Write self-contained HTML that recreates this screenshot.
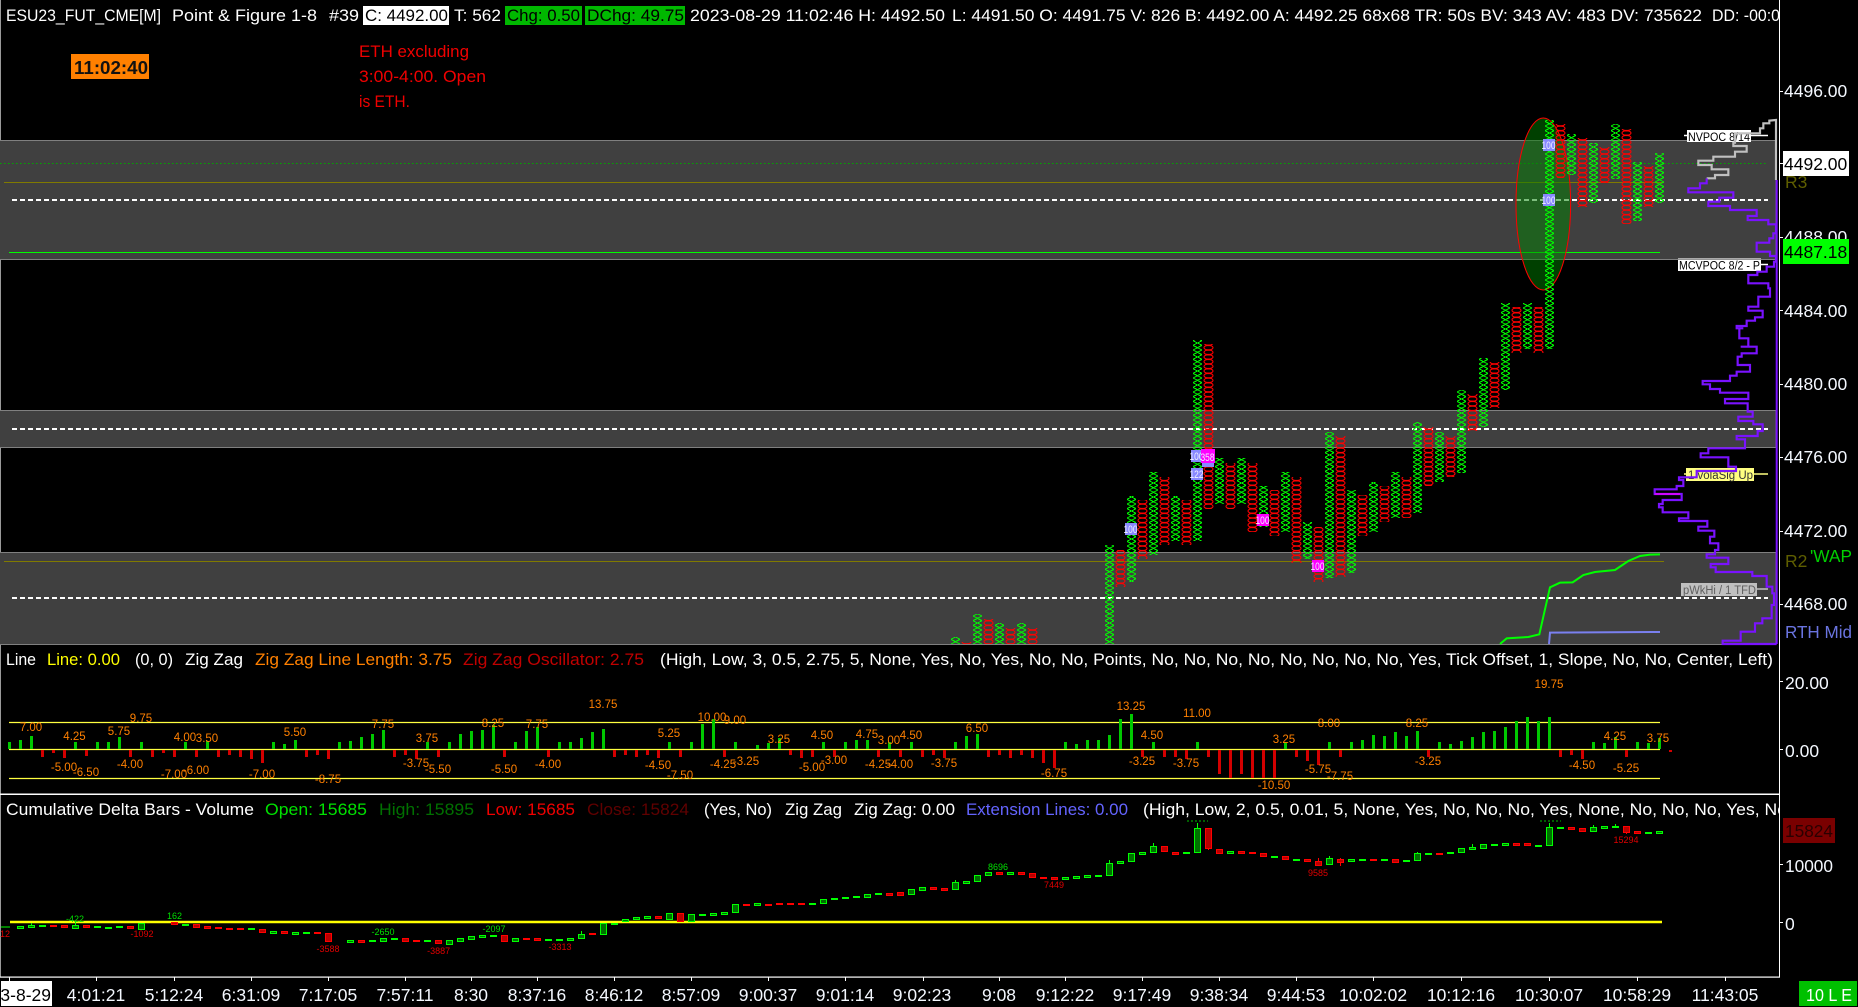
<!DOCTYPE html>
<html lang="en"><head><meta charset="utf-8"><title>ESU23 Point &amp; Figure</title>
<style>
html,body{margin:0;padding:0;background:#000;width:1858px;height:1007px;overflow:hidden}
svg{display:block}
text{font-family:"Liberation Sans",sans-serif;font-size:17px;fill:#fff;white-space:pre}
.o text,text.o{font-size:11.5px;fill:#ff8000;text-anchor:middle}
.s text{font-size:9px;text-anchor:middle}
.t text{text-anchor:middle;font-size:17.5px;fill:#f4f8ff}
.a text{font-size:17.5px;fill:#f4f8ff}
.b{font-size:11px;fill:#f0f0ff}
</style></head><body>
<svg width="1858" height="1007" viewBox="0 0 1858 1007" xmlns="http://www.w3.org/2000/svg">
<defs>
<pattern id="px" x="3.5" y="0" width="11" height="14" patternUnits="userSpaceOnUse">
<path shape-rendering="crispEdges" d="M1 0L10 4.67M10 0L1 4.67M1 4.67L10 9.33M10 4.67L1 9.33M1 9.33L10 14M10 9.33L1 14" stroke="#00ff00" stroke-width="1" fill="none"/>
</pattern>
<pattern id="po" x="3.5" y="0" width="11" height="14" patternUnits="userSpaceOnUse">
<g fill="none" stroke="#ff0000" stroke-width="1.1"><ellipse cx="5.5" cy="2.33" rx="4.5" ry="2.33"/><ellipse cx="5.5" cy="7" rx="4.5" ry="2.33"/><ellipse cx="5.5" cy="11.67" rx="4.5" ry="2.33"/></g>
<path d="M3 0h5M3 4.67h5M3 9.33h5M3 14h5" stroke="#ff0000" stroke-width="1.6" fill="none"/>
</pattern>
<clipPath id="c1"><rect x="0" y="0" width="1779" height="644"/></clipPath>
<clipPath id="c2"><rect x="0" y="0" width="1779" height="977"/></clipPath>
<clipPath id="c3"><rect x="1" y="981" width="51" height="25"/></clipPath>
</defs>

<!-- left edge and axis -->
<rect x="0" y="0" width="1" height="977" fill="#9a9a9a"/>
<rect x="1779" y="0" width="1" height="977" fill="#fff"/>

<!-- bands -->
<g fill="#404040" stroke="#808080" stroke-width="1">
<rect x="-1" y="140.5" width="1777" height="119"/>
<rect x="-1" y="410.5" width="1777" height="37"/>
<rect x="-1" y="552.5" width="1777" height="92"/>
</g>
<path d="M0 163.5H1768" stroke="#00a800" stroke-width="1" stroke-dasharray="1.5 2.5"/>
<path d="M4 182.5H1664" stroke="#807a00" stroke-width="1"/>
<path d="M9 252.5H1660" stroke="#00ff00" stroke-width="1"/>
<path d="M4 561.5H1664" stroke="#807a00" stroke-width="1"/>
<g stroke="#fff" stroke-width="2" stroke-dasharray="5 3">
<path d="M12 200H1768"/><path d="M12 429H1768"/><path d="M12 598H1768"/>
</g>

<!-- ellipse -->
<ellipse cx="1543.3" cy="204" rx="27.3" ry="86" fill="#008000" fill-opacity=".5" stroke="#ff0000" stroke-width="1"/>

<!-- point & figure columns -->
<g clip-path="url(#c1)"><g transform="translate(.5 0)">
<path fill="url(#px)" d="M949.5 637h11v8h-11zM971.5 614h11v31h-11zM993.5 623h11v22h-11zM1015.5 623h11v22h-11zM1103.5 545h11v100h-11zM1125.5 496h11v86h-11zM1147.5 472h11v83h-11zM1169.5 496h11v45h-11zM1191.5 340h11v201h-11zM1213.5 458h11v46h-11zM1235.5 458h11v46h-11zM1257.5 486h11v41h-11zM1279.5 472h11v60h-11zM1301.5 522h11v37h-11zM1323.5 432h11v146h-11zM1345.5 490h11v83h-11zM1367.5 482h11v50h-11zM1389.5 472h11v46h-11zM1411.5 422h11v91h-11zM1433.5 432h11v50h-11zM1455.5 390h11v83h-11zM1477.5 358h11v69h-11zM1499.5 303h11v87h-11zM1521.5 303h11v46h-11zM1543.5 120h11v229h-11zM1565.5 134h11v41h-11zM1587.5 143h11v60h-11zM1609.5 124h11v55h-11zM1631.5 162h11v59h-11zM1653.5 153h11v50h-11z"/>
<path fill="url(#po)" d="M960.5 642h11v3h-11zM982.5 619h11v26h-11zM1004.5 628h11v17h-11zM1026.5 628h11v17h-11zM1114.5 550h11v37h-11zM1136.5 500h11v59h-11zM1158.5 477h11v68h-11zM1180.5 500h11v45h-11zM1202.5 344h11v165h-11zM1224.5 463h11v46h-11zM1246.5 463h11v69h-11zM1268.5 490h11v46h-11zM1290.5 477h11v86h-11zM1312.5 527h11v55h-11zM1334.5 436h11v141h-11zM1356.5 495h11v41h-11zM1378.5 486h11v36h-11zM1400.5 477h11v41h-11zM1422.5 427h11v59h-11zM1444.5 436h11v41h-11zM1466.5 394h11v37h-11zM1488.5 362h11v46h-11zM1510.5 307h11v46h-11zM1532.5 307h11v46h-11zM1554.5 124h11v54h-11zM1576.5 138h11v69h-11zM1598.5 147h11v36h-11zM1620.5 129h11v95h-11zM1642.5 166h11v41h-11z"/>
</g></g>

<!-- badges -->
<g>
<rect x="1543" y="139" width="12" height="12" fill="#8888ff"/><text class="b" x="1541.5" y="149" textLength="14" lengthAdjust="spacingAndGlyphs">100</text>
<rect x="1543" y="194" width="12" height="12" fill="#8888ff"/><text class="b" x="1541.5" y="204" textLength="14" lengthAdjust="spacingAndGlyphs">100</text>
<rect x="1125" y="523" width="12" height="12" fill="#8888ff"/><text class="b" x="1123.5" y="533" textLength="14" lengthAdjust="spacingAndGlyphs">100</text>
<rect x="1191" y="450" width="12" height="12" fill="#8888ff"/><text class="b" x="1189.5" y="460" textLength="14" lengthAdjust="spacingAndGlyphs">100</text>
<rect x="1191" y="468" width="12" height="12" fill="#8888ff"/><text class="b" x="1189.5" y="478" textLength="14" lengthAdjust="spacingAndGlyphs">122</text>
<rect x="1202" y="455" width="12" height="12" fill="#8888ff"/>
<rect x="1201" y="449" width="14" height="14" fill="#ff00ff"/><text class="b" x="1200.5" y="461" textLength="14" lengthAdjust="spacingAndGlyphs">358</text>
<rect x="1257" y="514" width="12" height="12" fill="#ff00ff"/><text class="b" x="1255.5" y="524" textLength="14" lengthAdjust="spacingAndGlyphs">100</text>
<rect x="1312" y="560" width="12" height="12" fill="#ff00ff"/><text class="b" x="1310.5" y="570" textLength="14" lengthAdjust="spacingAndGlyphs">100</text>
</g>

<!-- level labels -->
<path d="M1684 135.5H1768" stroke="#fff" stroke-width="1.5"/>
<rect x="1687" y="130" width="64" height="12" fill="#fff"/>
<text x="1688" y="141" textLength="62" lengthAdjust="spacingAndGlyphs" style="font-size:11.5px;fill:#000">NVPOC 8/14</text>
<path d="M1740 264.5H1768" stroke="#fff" stroke-width="1.5"/>
<rect x="1678" y="258" width="83" height="1.5" fill="#aaa"/>
<rect x="1678" y="260" width="83" height="11" fill="#fff"/>
<text x="1679" y="269.5" textLength="81" lengthAdjust="spacingAndGlyphs" style="font-size:11.5px;fill:#000">MCVPOC 8/2 - P</text>
<path d="M1684 474H1768" stroke="#ffff80" stroke-width="1.5"/>
<rect x="1686" y="468" width="68" height="13" fill="#ffff80"/>
<text x="1688" y="479" textLength="65" lengthAdjust="spacingAndGlyphs" style="font-size:11.5px;fill:#333">1 volaSig Up</text>
<path d="M1750 589H1768" stroke="#c0c0c0" stroke-width="1.5"/>
<rect x="1681" y="583" width="76" height="13" fill="#c0c0c0"/>
<text x="1683" y="594" textLength="73" lengthAdjust="spacingAndGlyphs" style="font-size:11.5px;fill:#606060">pWkHi / 1 TFD</text>

<!-- VWAP lines -->
<g transform="translate(1480 390) scale(.33333)" fill="none" stroke-width="6">
<path stroke="#00ff00" d="M60 762L80 745L115 743L145 741L178 733L190 680L210 592L240 578L278 577L310 555L345 546L405 540L445 513L480 498L510 494L540 493"/>
<path stroke="#7a80f0" d="M207 762L210 728L540 726"/>
</g>

<!-- volume profile -->
<g transform="translate(1480 90) scale(.33333)" fill="none" stroke-width="6.5">
<path stroke="#c0c0c0" d="M888 270V90L868 92V100H850V115H840V130H765V158H760V168H800V185H765V200H700V212H655V225H695V238H745V255H705V265H680"/>
<path stroke="#7a12ff" d="M680 265V280H660V295H625V307H760V323H718V335H685V348H750V360H830V378H803V390H865V403H888V430H880V445H868V458H830V485H870V498H888V515H882V530H860V545H832V555H805V580H865V595H870V620H835V650H805V662H848V682H825V692H800V708H770V715H790H778V745H805V770H782H830V790H785V800H773V825H810V845H770V857H750V873H668V883H690V897H720V900"/>
</g>
<g transform="translate(1480 390) scale(.33333)" fill="none" stroke-width="6.5">
<path stroke="#7a12ff" d="M720 0V8H805V27H735V40H803V65H818V80H775V93H820V103H848V123H833V138H770V148H795V175H685V190H662V202H745V230H768V243H650V262H597V270H610V288H590V298H524V312H605V330H548V342H537V352H548V367H625V385H597V393H682V410H655V422H703V440H690V460H715V480H705V493H680V503H745V522H692V532H707V546H817V558H860V590H877V610H882V645H875V685H847V700H825V725H782V752H728V762H890"/>
<path stroke="#ff00ff" stroke-width="4" d="M524 312H600"/>
</g>
<rect x="1775.7" y="180" width="2" height="464" fill="#7a12ff"/>

<!-- price axis -->
<path d="M1780 91.5h3M1780 163.5h3M1780 237.5h3M1780 310.5h3M1780 384.5h3M1780 457.5h3M1780 531.5h3M1780 604.5h3M1780 681.5h3M1780 749.5h3M1780 864.5h3M1780 922.5h3" stroke="#fff" fill="none"/>
<g class="a">
<text x="1784" y="97">4496.00</text>
<text x="1784" y="243">4488.00</text>
<text x="1784" y="317">4484.00</text>
<text x="1784" y="390">4480.00</text>
<text x="1784" y="463">4476.00</text>
<text x="1784" y="537">4472.00</text>
<text x="1784" y="610">4468.00</text>
<text x="1785" y="689">20.00</text>
<text x="1785" y="757">0.00</text>
<text x="1785" y="872" textLength="48" lengthAdjust="spacingAndGlyphs">10000</text>
<text x="1785" y="930">0</text>
</g>
<rect x="1783" y="151" width="66" height="25" fill="#fff"/><text x="1784" y="170" style="font-size:17.5px;fill:#000">4492.00</text>
<rect x="1783" y="239" width="66" height="25" fill="#00ff00"/><text x="1784" y="258" style="font-size:17.5px;fill:#000">4487.18</text>
<text x="1785" y="188" style="font-size:17.5px;fill:#5e5e00">R3</text>
<text x="1785" y="567" style="font-size:17.5px;fill:#5e5e00">R2</text>
<text x="1810" y="562" textLength="42" lengthAdjust="spacingAndGlyphs" style="font-size:17.5px;fill:#00d000">'WAP</text>
<text x="1785" y="638" textLength="67" lengthAdjust="spacingAndGlyphs" style="font-size:17.5px;fill:#6a74e0">RTH Mid</text>
<rect x="1783" y="818" width="52" height="25" fill="#7a0000"/><text x="1785" y="837" textLength="48" lengthAdjust="spacingAndGlyphs" style="font-size:17.5px;fill:#2a0000">15824</text>

<!-- header row -->
<g clip-path="url(#c2)">
<text x="6" y="21" textLength="155" lengthAdjust="spacingAndGlyphs">ESU23_FUT_CME[M]</text>
<text x="172" y="21" textLength="145" lengthAdjust="spacingAndGlyphs">Point &amp; Figure 1-8</text>
<text x="329" y="21" textLength="30" lengthAdjust="spacingAndGlyphs">#39</text>
<rect x="363" y="6" width="86" height="19" fill="#fff"/>
<text x="365" y="21" textLength="83" lengthAdjust="spacingAndGlyphs" style="fill:#000">C: 4492.00</text>
<text x="454" y="21" textLength="47" lengthAdjust="spacingAndGlyphs">T: 562</text>
<rect x="505" y="6" width="77" height="19" fill="#00b800"/>
<text x="507" y="21" textLength="73" lengthAdjust="spacingAndGlyphs" style="fill:#000">Chg: 0.50</text>
<rect x="585" y="6" width="100" height="19" fill="#00b800"/>
<text x="587" y="21" textLength="97" lengthAdjust="spacingAndGlyphs" style="fill:#000">DChg: 49.75</text>
<text x="690" y="21" textLength="255" lengthAdjust="spacingAndGlyphs">2023-08-29 11:02:46 H: 4492.50</text>
<text x="952" y="21" textLength="750" lengthAdjust="spacingAndGlyphs">L: 4491.50 O: 4491.75 V: 826 B: 4492.00 A: 4492.25 68x68 TR: 50s BV: 343 AV: 483 DV: 735622</text>
<text x="1712" y="21" textLength="68" lengthAdjust="spacingAndGlyphs">DD: -00:0</text>
</g>
<rect x="71" y="54" width="78" height="25" fill="#ff8000"/>
<text x="74" y="74" textLength="74" lengthAdjust="spacingAndGlyphs" style="font-size:18px;font-weight:bold;fill:#111">11:02:40</text>
<g>
<text x="359" y="57" textLength="110" lengthAdjust="spacingAndGlyphs" style="fill:#f00000">ETH excluding</text>
<text x="359" y="82" textLength="127" lengthAdjust="spacingAndGlyphs" style="fill:#f00000">3:00-4:00. Open</text>
<text x="359" y="107" textLength="51" lengthAdjust="spacingAndGlyphs" style="fill:#f00000">is ETH.</text>
</g>

<!-- oscillator pane -->
<rect x="0" y="793.5" width="1779" height="1.5" fill="#fff"/>
<text x="6" y="665" textLength="30" lengthAdjust="spacingAndGlyphs">Line</text>
<text x="47" y="665" textLength="73" lengthAdjust="spacingAndGlyphs" style="fill:#ffff00">Line: 0.00</text>
<text x="135" y="665" textLength="38" lengthAdjust="spacingAndGlyphs">(0, 0)</text>
<text x="185" y="665" textLength="58" lengthAdjust="spacingAndGlyphs">Zig Zag</text>
<text x="255" y="665" textLength="197" lengthAdjust="spacingAndGlyphs" style="fill:#ff8000">Zig Zag Line Length: 3.75</text>
<text x="463" y="665" textLength="181" lengthAdjust="spacingAndGlyphs" style="fill:#c00000">Zig Zag Oscillator: 2.75</text>
<text x="660" y="665" textLength="1113" lengthAdjust="spacingAndGlyphs">(High, Low, 3, 0.5, 2.75, 5, None, Yes, No, Yes, No, No, Points, No, No, No, No, No, No, No, No, Yes, Tick Offset, 1, Slope, No, No, Center, Left)</text>
<path d="M9 722.5H1660M9 749.5H1660M9 778.5H1660" stroke="#ffff40" stroke-width="1.3" fill="none"/>
<g transform="translate(.5 0)">
<path stroke="#00c800" stroke-width="3" fill="none" d="M9 749v-7M20 749v-9M31 749v-13M75 749v-7M97 749v-7M108 749v-7M119 749v-12M141 749v-7M185 749v-7M207 749v-8M273 749v-7M284 749v-5M295 749v-9M339 749v-7M350 749v-8M361 749v-12M372 749v-15M383 749v-19M427 749v-7M449 749v-7M460 749v-15M471 749v-18M482 749v-19M493 749v-24M515 749v-7M526 749v-18M537 749v-22M559 749v-7M570 749v-7M581 749v-11M592 749v-17M603 749v-20M669 749v-7M691 749v-7M702 749v-25M713 749v-30M735 749v-7M757 749v-4M768 749v-6M779 749v-11M823 749v-7M845 749v-7M856 749v-9M867 749v-9M889 749v-7M911 749v-7M955 749v-7M966 749v-13M977 749v-15M1065 749v-7M1076 749v-5M1087 749v-9M1098 749v-9M1109 749v-14M1120 749v-30M1131 749v-35M1153 749v-7M1197 749v-7M1285 749v-7M1329 749v-7M1351 749v-7M1362 749v-9M1373 749v-14M1384 749v-13M1395 749v-17M1406 749v-13M1417 749v-18M1439 749v-7M1450 749v-5M1461 749v-8M1472 749v-12M1483 749v-17M1494 749v-18M1505 749v-22M1516 749v-28M1527 749v-32M1538 749v-28M1549 749v-32M1593 749v-7M1604 749v-6M1615 749v-12M1637 749v-7M1648 749v-6M1659 749v-11"/>
<path stroke="#d40000" stroke-width="3" fill="none" d="M42 750v7M53 750v3M64 750v8M86 750v6M130 750v7M152 750v7M163 750v3M174 750v7M196 750v7M218 750v7M229 750v5M240 750v7M251 750v9M262 750v13M306 750v7M317 750v5M328 750v9M394 750v7M405 750v5M416 750v9M438 750v7M504 750v7M548 750v7M614 750v7M625 750v5M636 750v7M647 750v5M658 750v8M680 750v7M724 750v7M790 750v5M801 750v8M812 750v7M834 750v7M878 750v7M900 750v7M922 750v7M933 750v5M944 750v8M988 750v7M999 750v5M1010 750v8M1021 750v5M1032 750v8M1043 750v13M1054 750v18M1142 750v7M1164 750v7M1175 750v7M1186 750v9M1208 750v7M1219 750v24M1230 750v28M1241 750v24M1252 750v28M1263 750v28M1274 750v28M1296 750v7M1307 750v11M1318 750v15M1340 750v7M1428 750v7M1560 750v7M1571 750v5M1582 750v9M1626 750v7M1670 750v2"/>
</g>
<g class="o">
<text x="31" y="731">7.00</text><text x="74.5" y="740">4.25</text><text x="119" y="735">5.75</text><text x="141" y="722">9.75</text><text x="185" y="741">4.00</text><text x="207" y="742">3.50</text><text x="295" y="736">5.50</text><text x="383" y="728">7.75</text><text x="427" y="742">3.75</text><text x="493" y="727">8.25</text><text x="537" y="728">7.75</text><text x="603" y="708">13.75</text><text x="669" y="737">5.25</text><text x="712" y="721">10.00</text><text x="735" y="724">9.00</text><text x="779" y="743">3.25</text>
<text x="64" y="771">-5.00</text><text x="86" y="776">-6.50</text><text x="130" y="768">-4.00</text><text x="174" y="778">-7.00</text><text x="196" y="774">-6.00</text><text x="262" y="778">-7.00</text><text x="328" y="783">-8.75</text><text x="416" y="767">-3.75</text><text x="438" y="773">-5.50</text><text x="504" y="773">-5.50</text><text x="548" y="768">-4.00</text><text x="658" y="769">-4.50</text><text x="680" y="779">-7.50</text><text x="723" y="768">-4.25</text><text x="746" y="765">-3.25</text>
<text x="812" y="771">-5.00</text><text x="822" y="739">4.50</text><text x="834" y="764">-3.00</text><text x="867" y="738">4.75</text><text x="889" y="744">3.00</text><text x="878" y="768">-4.25</text><text x="911" y="739">4.50</text><text x="900" y="768">-4.00</text><text x="944" y="767">-3.75</text><text x="977" y="732">6.50</text><text x="1131" y="710">13.25</text><text x="1197" y="717">11.00</text><text x="1152" y="739">4.50</text><text x="1142" y="765">-3.25</text><text x="1186" y="767">-3.75</text><text x="1054" y="777">-6.75</text><text x="1284" y="743">3.25</text><text x="1274" y="789">-10.50</text><text x="1329" y="727">8.00</text><text x="1417" y="727">8.25</text><text x="1318" y="773">-5.75</text><text x="1340" y="780">-7.75</text><text x="1428" y="765">-3.25</text><text x="1549" y="688">19.75</text><text x="1615" y="740">4.25</text><text x="1582" y="769">-4.50</text><text x="1626" y="772">-5.25</text><text x="1658" y="742">3.75</text>
</g>

<!-- cumulative delta pane -->
<g clip-path="url(#c2)">
<text x="6" y="815" textLength="248" lengthAdjust="spacingAndGlyphs">Cumulative Delta Bars - Volume</text>
<text x="265" y="815" textLength="102" lengthAdjust="spacingAndGlyphs" style="fill:#00e000">Open: 15685</text>
<text x="379" y="815" textLength="95" lengthAdjust="spacingAndGlyphs" style="fill:#007000">High: 15895</text>
<text x="486" y="815" textLength="89" lengthAdjust="spacingAndGlyphs" style="fill:#f00000">Low: 15685</text>
<text x="587" y="815" textLength="102" lengthAdjust="spacingAndGlyphs" style="fill:#600000">Close: 15824</text>
<text x="704" y="815" textLength="68" lengthAdjust="spacingAndGlyphs">(Yes, No)</text>
<text x="785" y="815" textLength="57" lengthAdjust="spacingAndGlyphs">Zig Zag</text>
<text x="854" y="815" textLength="101" lengthAdjust="spacingAndGlyphs">Zig Zag: 0.00</text>
<text x="966" y="815" textLength="162" lengthAdjust="spacingAndGlyphs" style="fill:#6464ff">Extension Lines: 0.00</text>
<text x="1143" y="815" textLength="644" lengthAdjust="spacingAndGlyphs">(High, Low, 2, 0.5, 0.01, 5, None, Yes, No, No, No, Yes, None, No, No, No, Yes, No</text>
</g>
<path d="M10 922H1662" stroke="#ffff00" stroke-width="2.4"/>
<path d="M1187 821H1208M1540 821H1561" stroke="#00c000" stroke-width="1" stroke-dasharray="2 2"/>
<path stroke="#00ff00" stroke-width="1" fill="none" d="M1197.5 823v5M1549.5 823v4M1153.5 843v3M1109.5 860v3M1329.5 856v2M1417.5 852v1M581.5 931v3M955.5 880v2M31.5 923v2M75.5 922v3M1 927h9M1593.5 825v2M1615.5 824v2M1472.5 844v3"/>
<path stroke="#ff0000" stroke-width="1" fill="none" d="M1626.5 826v8M1326.5 861v4M1340.5 858v8M1208.5 828v22M1318.5 858v6"/>
<g transform="translate(.5 .5)">
<path fill="#007000" stroke="#00ff00" stroke-width="1" d="M17 926h6v2h-6zM28 925h6v2h-6zM39 925h6v1h-6zM72 925h6v3h-6zM94 926h6v1h-6zM105 927h6v1h-6zM116 926h6v1h-6zM138 923h6v6h-6zM182 924h6v1h-6zM248 928h6v1h-6zM270 931h6v2h-6zM292 932h6v2h-6zM303 932h6v1h-6zM347 940h6v2h-6zM369 940h6v1h-6zM380 938h6v3h-6zM391 938h6v1h-6zM424 940h6v1h-6zM446 940h6v4h-6zM457 938h6v3h-6zM468 936h6v3h-6zM479 935h6v2h-6zM490 935h6v1h-6zM512 938h6v3h-6zM545 939h6v1h-6zM556 939h6v1h-6zM567 938h6v2h-6zM578 934h6v4h-6zM600 923h6v11h-6zM611 923h6v1h-6zM622 919h6v2h-6zM633 917h6v2h-6zM644 916h6v2h-6zM666 913h6v6h-6zM688 914h6v7h-6zM699 914h6v1h-6zM710 913h6v2h-6zM721 912h6v2h-6zM732 904h6v8h-6zM754 903h6v2h-6zM809 903h6v1h-6zM820 899h6v4h-6zM831 898h6v1h-6zM842 897h6v1h-6zM853 896h6v1h-6zM864 894h6v3h-6zM875 893h6v1h-6zM908 889h6v5h-6zM919 887h6v3h-6zM952 882h6v7h-6zM963 881h6v2h-6zM974 875h6v6h-6zM985 872h6v3h-6zM1007 872h6v2h-6zM1062 877h6v2h-6zM1073 876h6v2h-6zM1084 875h6v2h-6zM1095 875h6v1h-6zM1106 863h6v12h-6zM1117 861h6v2h-6zM1128 853h6v8h-6zM1139 852h6v2h-6zM1150 846h6v6h-6zM1183 852h6v1h-6zM1194 828h6v24h-6zM1227 851h6v2h-6zM1271 856h6v1h-6zM1293 859h6v1h-6zM1326 858h6v6h-6zM1348 859h6v2h-6zM1359 859h6v1h-6zM1381 859h6v1h-6zM1403 860h6v1h-6zM1414 853h6v7h-6zM1425 853h6v1h-6zM1447 852h6v1h-6zM1458 848h6v4h-6zM1469 847h6v2h-6zM1480 844h6v4h-6zM1491 844h6v1h-6zM1502 843h6v2h-6zM1535 845h6v1h-6zM1546 827h6v18h-6zM1557 827h6v1h-6zM1590 827h6v4h-6zM1601 826h6v2h-6zM1612 826h6v1h-6zM1645 832h6v1h-6zM1656 831h6v2h-6z"/>
<path fill="#b80000" stroke="#ff0000" stroke-width="1" d="M50 925h6v1h-6zM61 925h6v2h-6zM83 925h6v2h-6zM127 926h6v2h-6zM171 922h6v2h-6zM193 924h6v3h-6zM204 926h6v2h-6zM215 927h6v1h-6zM226 928h6v1h-6zM237 928h6v1h-6zM259 929h6v3h-6zM281 931h6v2h-6zM314 932h6v1h-6zM325 933h6v8h-6zM358 940h6v2h-6zM402 938h6v3h-6zM413 940h6v1h-6zM435 940h6v3h-6zM501 935h6v6h-6zM523 938h6v1h-6zM534 938h6v2h-6zM589 933h6v1h-6zM655 916h6v2h-6zM677 913h6v8h-6zM743 904h6v1h-6zM765 904h6v1h-6zM776 903h6v1h-6zM787 903h6v1h-6zM798 903h6v1h-6zM886 893h6v2h-6zM897 892h6v3h-6zM930 887h6v2h-6zM941 888h6v2h-6zM996 872h6v2h-6zM1018 872h6v2h-6zM1029 873h6v4h-6zM1040 877h6v1h-6zM1051 877h6v2h-6zM1161 846h6v5h-6zM1172 852h6v2h-6zM1205 828h6v20h-6zM1216 849h6v4h-6zM1238 851h6v2h-6zM1249 852h6v1h-6zM1260 853h6v3h-6zM1282 856h6v3h-6zM1304 859h6v2h-6zM1315 861h6v4h-6zM1337 859h6v3h-6zM1370 859h6v1h-6zM1392 859h6v3h-6zM1436 853h6v1h-6zM1513 843h6v2h-6zM1524 843h6v2h-6zM1568 827h6v2h-6zM1579 828h6v3h-6zM1623 826h6v6h-6zM1634 831h6v2h-6z"/>
</g>
<g class="s">
<text x="75" y="922" style="fill:#00e000">-422</text><text x="174.5" y="919" style="fill:#00e000">162</text><text x="383" y="935" style="fill:#00e000">-2650</text><text x="494" y="932" style="fill:#00e000">-2097</text><text x="998" y="870" style="fill:#00e000">8696</text>
<text x="5" y="937" style="fill:#e00000">12</text><text x="142" y="937" style="fill:#e00000">-1092</text><text x="328" y="952" style="fill:#e00000">-3588</text><text x="438.6" y="954" style="fill:#e00000">-3887</text><text x="560" y="950" style="fill:#e00000">-3313</text><text x="1054" y="888" style="fill:#e00000">7449</text><text x="1318" y="876" style="fill:#e00000">9585</text><text x="1626" y="843" style="fill:#e00000">15294</text>
</g>

<!-- time axis -->
<rect x="0" y="976.5" width="1780" height="1.2" fill="#fff"/>
<path stroke="#fff" fill="none" d="M9.5 977v4M96.5 977v4M174.5 977v4M251.5 977v4M328.5 977v4M405.5 977v4M471.5 977v4M537.5 977v4M614.5 977v4M691.5 977v4M768.5 977v4M845.5 977v4M923.5 977v4M999.5 977v4M1065.5 977v4M1142.5 977v4M1219.5 977v4M1296.5 977v4M1373.5 977v4M1461.5 977v4M1549.5 977v4M1637.5 977v4M1725.5 977v4"/>
<rect x="1" y="981" width="51" height="25" fill="#fff"/>
<g clip-path="url(#c3)"><text x="51" y="1001" text-anchor="end" style="font-size:17.5px;fill:#000">3-8-29</text></g>
<g class="t">
<text x="96" y="1001">4:01:21</text><text x="174" y="1001">5:12:24</text><text x="251" y="1001">6:31:09</text><text x="328" y="1001">7:17:05</text><text x="405" y="1001">7:57:11</text><text x="471" y="1001">8:30</text><text x="537" y="1001">8:37:16</text><text x="614" y="1001">8:46:12</text><text x="691" y="1001">8:57:09</text><text x="768" y="1001">9:00:37</text><text x="845" y="1001">9:01:14</text><text x="922" y="1001">9:02:23</text><text x="999" y="1001">9:08</text><text x="1065" y="1001">9:12:22</text><text x="1142" y="1001">9:17:49</text><text x="1219" y="1001">9:38:34</text><text x="1296" y="1001">9:44:53</text><text x="1373" y="1001">10:02:02</text><text x="1461" y="1001">10:12:16</text><text x="1549" y="1001">10:30:07</text><text x="1637" y="1001">10:58:29</text><text x="1725" y="1001">11:43:05</text>
</g>
<rect x="1799" y="981" width="58" height="25" fill="#00c000"/>
<text x="1806" y="1001" textLength="46" lengthAdjust="spacingAndGlyphs" style="font-size:17.5px">10 L E</text>
</svg>
</body></html>
